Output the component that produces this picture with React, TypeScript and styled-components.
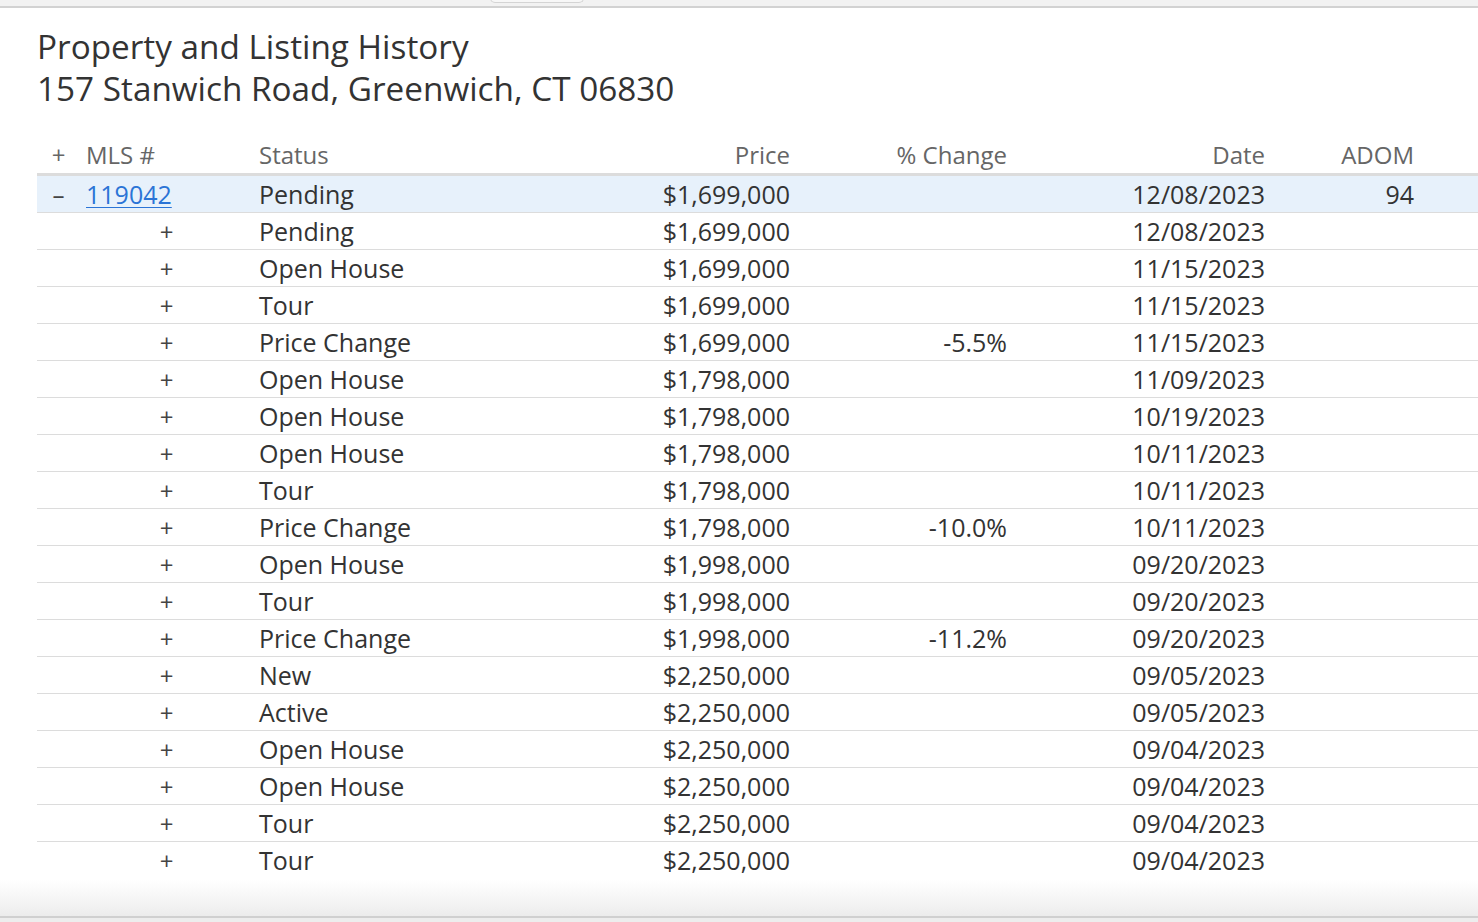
import React from "react";
import styled, { createGlobalStyle } from "styled-components";

const GlobalStyle = createGlobalStyle`
  html, body {
    margin: 0;
    padding: 0;
    background: #f2f2f2;
    overflow: hidden;
  }
  body {
    font-family: "Open Sans", "Noto Sans", sans-serif;
    color: #333;
  }
`;

type Row = {
  status: string;
  price: string;
  change?: string;
  date: string;
};

const rows: Row[] = [
  { status: "Pending", price: "$1,699,000", date: "12/08/2023" },
  { status: "Open House", price: "$1,699,000", date: "11/15/2023" },
  { status: "Tour", price: "$1,699,000", date: "11/15/2023" },
  { status: "Price Change", price: "$1,699,000", change: "-5.5%", date: "11/15/2023" },
  { status: "Open House", price: "$1,798,000", date: "11/09/2023" },
  { status: "Open House", price: "$1,798,000", date: "10/19/2023" },
  { status: "Open House", price: "$1,798,000", date: "10/11/2023" },
  { status: "Tour", price: "$1,798,000", date: "10/11/2023" },
  { status: "Price Change", price: "$1,798,000", change: "-10.0%", date: "10/11/2023" },
  { status: "Open House", price: "$1,998,000", date: "09/20/2023" },
  { status: "Tour", price: "$1,998,000", date: "09/20/2023" },
  { status: "Price Change", price: "$1,998,000", change: "-11.2%", date: "09/20/2023" },
  { status: "New", price: "$2,250,000", date: "09/05/2023" },
  { status: "Active", price: "$2,250,000", date: "09/05/2023" },
  { status: "Open House", price: "$2,250,000", date: "09/04/2023" },
  { status: "Open House", price: "$2,250,000", date: "09/04/2023" },
  { status: "Tour", price: "$2,250,000", date: "09/04/2023" },
  { status: "Tour", price: "$2,250,000", date: "09/04/2023" },
];

const TopBar = styled.div`
  position: relative;
  height: 6px;
  background: #f2f2f2;
  border-bottom: 2px solid #d2d2d2;
`;

const TopTab = styled.div`
  position: absolute;
  left: 490px;
  top: -2px;
  width: 92px;
  height: 4px;
  background: #f7f7f7;
  border: 1px solid #d4d4d4;
  border-top: none;
  border-radius: 0 0 5px 5px;
`;

const Panel = styled.div`
  height: 910px;
  background: #fff;
  display: flex;
  flex-direction: column;
  overflow: hidden;
`;

const Content = styled.div`
  flex: 1;
  padding: 17px 0 0 37px;
  overflow: hidden;
`;

const Title = styled.h1`
  margin: 0 0 26px;
  font-size: 33.3px;
  line-height: 42px;
  font-weight: 500;
  color: #333;
  white-space: nowrap;
`;

const Table = styled.table`
  border-collapse: collapse;
  table-layout: fixed;
  width: 1641px;
  font-size: 25px;
`;

const HeadCell = styled.th<{ align?: "left" | "right" | "center" }>`
  text-align: ${(p) => p.align ?? "left"};
  font-weight: 400;
  font-size: 24px;
  color: #666;
  padding: 0 6px;
  height: 38px;
  vertical-align: middle;
  border-bottom: 3px solid #dcdcdc;
  white-space: nowrap;
`;

const BodyRow = styled.tr<{ selected?: boolean }>`
  background: ${(p) => (p.selected ? "#e7f1fb" : "#fff")};
  border-bottom: 1px solid #dcdcdc;
  &:last-child {
    border-bottom: none;
  }
`;

const Cell = styled.td<{ align?: "left" | "right" | "center" }>`
  text-align: ${(p) => p.align ?? "left"};
  padding: 0 6px;
  height: 36px;
  line-height: 36px;
  vertical-align: middle;
  white-space: nowrap;
  color: #333;
`;

const Toggle = styled.span`
  color: #444;
  font-size: 24px;
  line-height: 1;
`;

const MlsLink = styled.a`
  color: #2b74d6;
  text-decoration: underline;
  text-underline-offset: 3px;
  text-decoration-thickness: 1px;
`;

const Footer = styled.div`
  height: 36px;
  flex-shrink: 0;
  background: linear-gradient(to bottom, #ffffff 0%, #f7f7f7 45%, #ececec 100%);
  border-bottom: 2px solid #d0d0d0;
`;

const BottomBar = styled.div`
  height: 4px;
  background: #ededed;
`;

export default function App() {
  return (
    <>
      <GlobalStyle />
      <TopBar>
        <TopTab />
      </TopBar>
      <Panel>
        <Content>
          <Title>
            Property and Listing History
            <br />
            157 Stanwich Road, Greenwich, CT 06830
          </Title>
          <Table>
            <colgroup>
              <col style={{ width: 43 }} />
              <col style={{ width: 173 }} />
              <col style={{ width: 287 }} />
              <col style={{ width: 256 }} />
              <col style={{ width: 217 }} />
              <col style={{ width: 258 }} />
              <col style={{ width: 149 }} />
              <col style={{ width: 258 }} />
            </colgroup>
            <thead>
              <tr>
                <HeadCell align="center">+</HeadCell>
                <HeadCell>MLS #</HeadCell>
                <HeadCell>Status</HeadCell>
                <HeadCell align="right">Price</HeadCell>
                <HeadCell align="right">% Change</HeadCell>
                <HeadCell align="right">Date</HeadCell>
                <HeadCell align="right">ADOM</HeadCell>
                <HeadCell />
              </tr>
            </thead>
            <tbody>
              <BodyRow selected>
                <Cell align="center">
                  <Toggle>–</Toggle>
                </Cell>
                <Cell>
                  <MlsLink href="#">119042</MlsLink>
                </Cell>
                <Cell>Pending</Cell>
                <Cell align="right">$1,699,000</Cell>
                <Cell align="right" />
                <Cell align="right">12/08/2023</Cell>
                <Cell align="right">94</Cell>
                <Cell />
              </BodyRow>
              {rows.map((r, i) => (
                <BodyRow key={i}>
                  <Cell />
                  <Cell align="center">
                    <Toggle>+</Toggle>
                  </Cell>
                  <Cell>{r.status}</Cell>
                  <Cell align="right">{r.price}</Cell>
                  <Cell align="right">{r.change ?? ""}</Cell>
                  <Cell align="right">{r.date}</Cell>
                  <Cell align="right" />
                  <Cell />
                </BodyRow>
              ))}
            </tbody>
          </Table>
        </Content>
        <Footer />
      </Panel>
      <BottomBar />
    </>
  );
}
